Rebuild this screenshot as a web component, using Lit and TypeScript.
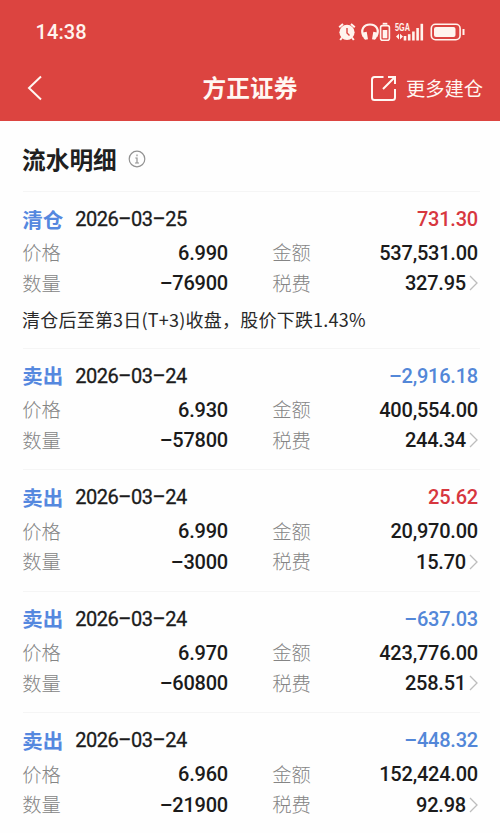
import { LitElement, html, css, svg } from "lit";
import { customElement, property } from "lit/decorators.js";

interface Entry {
  kind: string;
  date: string;
  profit: string;
  price: string;
  amount: string;
  quantity: string;
  fee: string;
  note?: string;
}

const ENTRIES: Entry[] = [
  { kind: "清仓", date: "2026–03–25", profit: "731.30", price: "6.990", amount: "537,531.00", quantity: "–76900", fee: "327.95", note: "清仓后至第3日(T+3)收盘，股价下跌1.43%" },
  { kind: "卖出", date: "2026–03–24", profit: "–2,916.18", price: "6.930", amount: "400,554.00", quantity: "–57800", fee: "244.34" },
  { kind: "卖出", date: "2026–03–24", profit: "25.62", price: "6.990", amount: "20,970.00", quantity: "–3000", fee: "15.70" },
  { kind: "卖出", date: "2026–03–24", profit: "–637.03", price: "6.970", amount: "423,776.00", quantity: "–60800", fee: "258.51" },
  { kind: "卖出", date: "2026–03–24", profit: "–448.32", price: "6.960", amount: "152,424.00", quantity: "–21900", fee: "92.98" },
];

@customElement("status-bar")
class StatusBar extends LitElement {
  static styles = css`
    :host { display: flex; height: 64px; box-sizing: border-box; padding: 0 34px 0 35.500px; align-items: center; justify-content: space-between; color: #fff4ee; }
    .time { font: 500 20px/24px Roboto, sans-serif; letter-spacing: 0.1px; }
    .icons { display: block; }
    .net { font: 700 11px "Liberation Sans", sans-serif; }
  `;
  render() {
    return html`
      <span class="time">14:38</span>
      <svg class="icons" width="128" height="20" viewBox="0 0 128 20" fill="none" stroke="currentColor">
        <circle cx="9" cy="10.3" r="7.6" fill="currentColor" stroke="none" />
        <path d="M1.200 5.200 5 1.900M16.800 5.200 13 1.900M4 15.500 2.200 18M14 15.500l1.800 2.500" stroke-width="2" />
        <path d="M9 6v5l2.500 2.500" stroke="#dc4440" stroke-width="1.400" />
        <path d="M25.600 14.500C22.300 8 25.500 2.500 32 2.500s9.700 5.500 6.400 12" stroke-width="2.200" />
        <path d="M25 10.500l3.700-.8 1.300 7.600-2.900.5c-1.900-1.600-2.800-4.300-2.100-7.300zM39 10.500l-3.700-.8-1.300 7.600 2.900.5c1.900-1.600 2.800-4.300 2.100-7.300z" fill="currentColor" stroke="none" />
        <rect x="42.600" y="3.600" width="8.800" height="14.600" rx="2" stroke-width="1.600" />
        <path d="M44.700 1.700h4.600" stroke-width="1.800" />
        <rect x="44.700" y="8" width="4.600" height="8.300" rx=".5" fill="currentColor" stroke="none" />
        <text class="net" x="57" y="9.200" textLength="15" lengthAdjust="spacingAndGlyphs" fill="currentColor" stroke="none">5GA</text>
        <path d="M58 14.600l3-2.800v5.600zM65 14.600l-3-2.800v5.600z" fill="currentColor" stroke="none" />
        ${[[67, 14], [71.2, 12.2], [75.4, 9.5], [79.6, 6], [83.8, 1.8]].map(
          ([x, y]) => svg`<path d="M${x} ${y}V18.500" stroke-width="2.600" />`
        )}
        <rect x="93.300" y="2.300" width="28.800" height="15.400" rx="4.200" stroke-width="1.600" />
        <rect x="96" y="5" width="21.500" height="10" rx="2" fill="currentColor" stroke="none" />
        <path d="M125.500 7v6" stroke-width="2" />
      </svg>
    `;
  }
}

@customElement("nav-bar")
class NavBar extends LitElement {
  static styles = css`
    :host { display: grid; grid-template-columns: 1fr auto 1fr; height: 57px; box-sizing: border-box; padding: 0 17px 9px; align-items: center; color: #fff7f2; font-family: "Noto Sans CJK SC", sans-serif; }
    svg { display: block; fill: none; stroke: currentColor; }
    .back { margin-left: 10px; }
    .title { font-size: 23.700px; font-weight: 700; line-height: 34px; margin-top: -3px; }
    .more { display: flex; align-items: center; justify-content: flex-end; gap: 9px; font-size: 19.300px; line-height: 28px; white-space: nowrap; }
  `;
  render() {
    return html`
      <svg class="back" width="16" height="26" viewBox="0 0 16 26" stroke-width="2"><path d="M14 1.500 2 13l12 11.500" /></svg>
      <span class="title">方正证券</span>
      <span class="more">
        <svg width="27" height="27" viewBox="0 0 27 27" stroke-width="2">
          <path d="M13.500 2H4.500Q2 2 2 4.500v18Q2 25 4.500 25h18Q25 25 25 22.500V14M18 2h7v7M25 2 13 14" />
        </svg>
        更多建仓
      </span>
    `;
  }
}

@customElement("trade-entry")
class TradeEntry extends LitElement {
  @property({ attribute: false }) entry!: Entry;
  static styles = css`
    :host { display: block; border-top: 1px solid #f5f5f5; padding: 12px 2px 13.500px 0; font-family: "Noto Sans CJK SC", sans-serif; }
    .head { display: flex; align-items: center; height: 30px; margin-bottom: 3.600px; }
    .kind { color: #5588df; font-size: 20.500px; font-weight: 700; width: 53px; line-height: 28px; margin: -1px 0 0 -0.700px; }
    .num { font-family: Roboto, sans-serif; font-size: 20px; font-weight: 500; letter-spacing: -0.220px; color: #1b1b1b; white-space: nowrap; }
    .date { font-weight: 400; letter-spacing: -0.480px; -webkit-text-stroke: 0.3px; }
    .profit { margin-left: auto; color: #d7373f; }
    .loss { color: #5387d8; }
    .details { display: grid; grid-template-columns: 1fr 1fr; column-gap: 45px; grid-auto-rows: 30.500px; margin-bottom: 0.400px; }
    .cell { display: flex; align-items: center; justify-content: space-between; }
    .label { font-size: 19.300px; line-height: 28px; font-weight: 300; color: #858585; margin: -1px 0 0 -0.700px; }
    .fee { display: flex; align-items: center; gap: 3px; }
    .fee svg { display: block; fill: none; stroke: #bdbdbd; stroke-width: 1.300; }
    .note { height: 35.500px; margin-left: -1px; font-size: 18px; line-height: 41px; letter-spacing: 0.220px; color: #292929; white-space: nowrap; }
  `;
  render() {
    const e = this.entry;
    const loss = e.profit.startsWith("–");
    return html`
      <div class="head">
        <span class="kind">${e.kind}</span>
        <span class="num date">${e.date}</span>
        <span class="num profit ${loss ? "loss" : ""}">${e.profit}</span>
      </div>
      <div class="details">
        <div class="cell"><span class="label">价格</span><span class="num">${e.price}</span></div>
        <div class="cell"><span class="label">金额</span><span class="num">${e.amount}</span></div>
        <div class="cell"><span class="label">数量</span><span class="num">${e.quantity}</span></div>
        <div class="cell">
          <span class="label">税费</span>
          <span class="fee"><span class="num">${e.fee}</span>
            <svg width="9" height="16" viewBox="0 0 9 16"><path d="M1 1l7 7-7 7" /></svg></span>
        </div>
      </div>
      ${e.note ? html`<div class="note">${e.note}</div>` : ""}
    `;
  }
}

@customElement("app-root")
class AppRoot extends LitElement {
  static styles = css`
    :host { display: block; height: 833px; overflow: hidden; background: #fefefe; }
    header { background: #dc4440; }
    .section { display: flex; align-items: center; gap: 11px; height: 70px; padding: 6px 22px 0; box-sizing: border-box; }
    h2 { margin: 0; font: 700 23.700px/34px "Noto Sans CJK SC", sans-serif; color: #202020; }
    .info { display: block; fill: none; stroke: #929292; stroke-width: 1.200; }
    .list { padding: 0 20px 0 23px; }
  `;
  render() {
    return html`
      <header><status-bar></status-bar><nav-bar></nav-bar></header>
      <div class="section">
        <h2>流水明细</h2>
        <svg class="info" width="18" height="18" viewBox="0 0 18 18">
          <circle cx="9" cy="9" r="7.800" /><path d="M9 4.500v1.700M7.300 8H9v5M7 13h4" />
        </svg>
      </div>
      <div class="list">${ENTRIES.map((e) => html`<trade-entry .entry=${e}></trade-entry>`)}</div>
    `;
  }
}
